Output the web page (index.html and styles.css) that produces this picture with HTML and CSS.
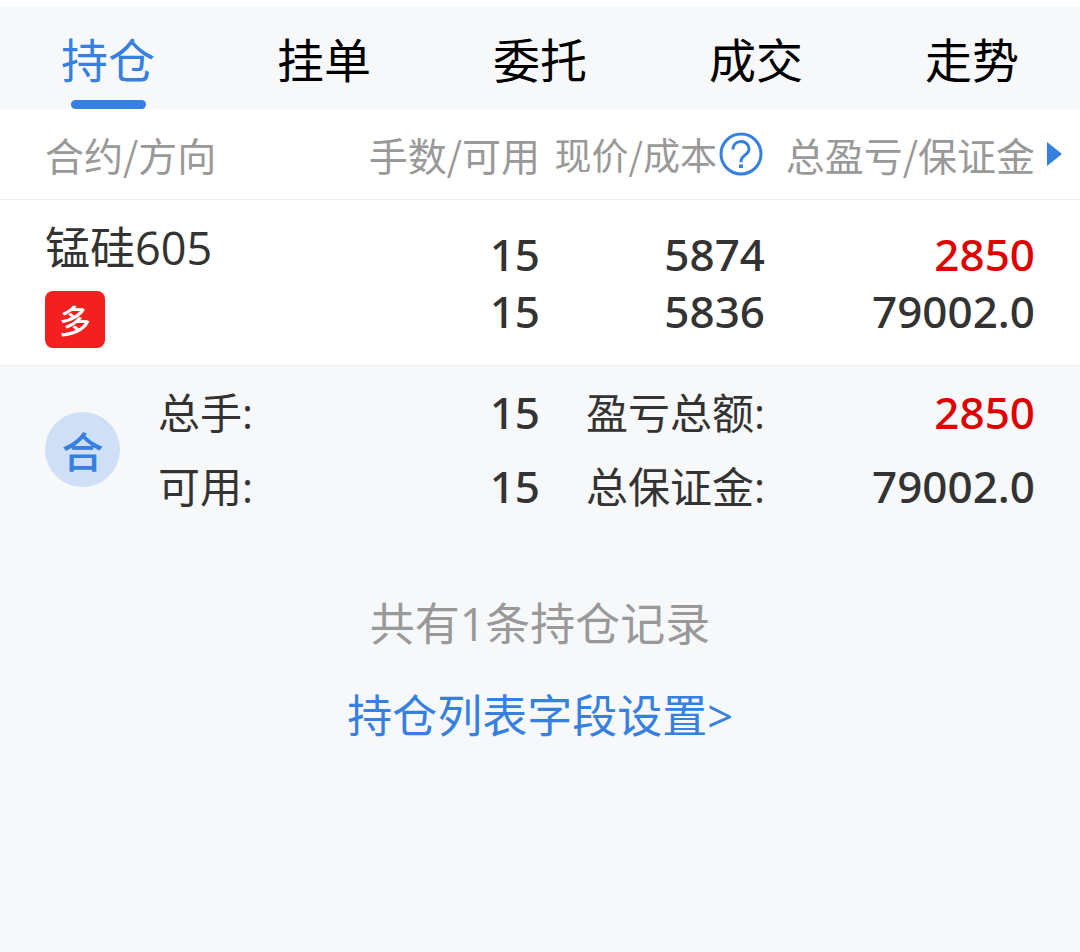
FILE: index.html
```html
<!DOCTYPE html>
<html lang="zh-CN">
<head>
<meta charset="UTF-8">
<meta name="viewport" content="width=device-width, initial-scale=1.0">
<link rel="stylesheet" href="styles.css">
<title>持仓</title>
</head>
<body>
<nav class="tabs">
  <button type="button" class="tab active">持仓</button>
  <button type="button" class="tab">挂单</button>
  <button type="button" class="tab">委托</button>
  <button type="button" class="tab">成交</button>
  <button type="button" class="tab">走势</button>
</nav>

<table class="positions">
  <colgroup>
    <col class="col-half">
    <col class="col-price">
    <col>
  </colgroup>
  <thead>
    <tr>
      <th>
        <div class="split"><span>合约/方向</span><span>手数/可用</span></div>
      </th>
      <th>
        <div class="price-head">
          <span>现价/成本</span>
          <button type="button" class="help" aria-label="说明">
            <svg width="44" height="44" viewBox="0 0 44 44" fill="none" stroke="#3580e0">
              <circle cx="22" cy="22" r="20" stroke-width="3"/>
              <path d="M14 17.500c0-5 3.500-8 8-8s8 3 8 7.200c0 3.300-1.700 4.800-4.200 6.500-2.600 1.800-3.800 3-3.800 7" stroke-width="3"/>
              <path d="M22 32.500v3.500" stroke-width="4"/>
            </svg>
          </button>
        </div>
      </th>
      <th class="last">
        <div class="profit-head">
          <span>总盈亏/保证金</span>
          <svg class="more" width="15" height="24" viewBox="0 0 15 24"><path d="M0 0l15 12L0 24z" fill="#3580e0"/></svg>
        </div>
      </th>
    </tr>
  </thead>
  <tbody>
    <tr>
      <td>
        <div class="split">
          <div class="contract">
            <div class="name">锰硅605</div>
            <span class="side">多</span>
          </div>
          <div class="num">15<br>15</div>
        </div>
      </td>
      <td class="num">5874<br>5836</td>
      <td class="num last"><span class="red">2850</span><br>79002.0</td>
    </tr>
  </tbody>
</table>

<section class="summary">
  <span class="sum-badge">合</span>
  <dl class="totals">
    <dt>总手:</dt>
    <dd>15</dd>
    <dt>盈亏总额:</dt>
    <dd class="red">2850</dd>
    <dt>可用:</dt>
    <dd>15</dd>
    <dt>总保证金:</dt>
    <dd>79002.0</dd>
  </dl>
</section>

<footer class="foot">
  <p class="count">共有1条持仓记录</p>
  <a href="#" class="settings">持仓列表字段设置&gt;</a>
</footer>
</body>
</html>
```
FILE: styles.css
```css
* {
  box-sizing: border-box;
}

body {
  margin: 0;
  border-top: 7px solid #fff;
  min-height: 100vh;
  background: #f7f8fa;
  color: #333;
  font-family: "Open Sans", "Noto Sans CJK SC", sans-serif;
}

button {
  padding: 0;
  border: 0;
  background: none;
  font-family: inherit;
  cursor: pointer;
}

/* top tabs */
.tabs {
  display: flex;
}

.tab {
  flex: 1;
  display: flex;
  flex-direction: column;
  align-items: center;
  justify-content: space-between;
  height: 102px;
  padding-top: 18px;
  font-size: 47px;
  line-height: 70px;
  color: #000;
}

.tab.active {
  color: #3580e0;
}

.tab.active::after {
  content: "";
  width: 75px;
  height: 9px;
  border-radius: 5px;
  background: #3580e0;
}

/* position list */
.positions {
  width: 100%;
  table-layout: fixed;
  border-collapse: collapse;
  background: #fff;
}

.col-half {
  width: 50%;
}

.col-price {
  width: 225px;
}

.positions th {
  height: 90px;
  padding: 0;
  border-bottom: 1px solid #eceef0;
  font-family: "Noto Sans CJK SC", sans-serif;
  font-size: 39px;
  font-weight: 400;
  line-height: 56px;
  color: #999;
  text-align: right;
  white-space: nowrap;
}

.positions td {
  height: 166px;
  padding: 26px 0 0;
  border-bottom: 1px solid #eceef0;
  vertical-align: top;
}

.split {
  display: flex;
  justify-content: space-between;
  padding-left: 45px;
}

.price-head {
  display: flex;
  align-items: center;
  justify-content: flex-end;
  gap: 2px;
  padding-right: 2px;
  font-size: 37px;
}

.help {
  display: flex;
}

.profit-head {
  display: flex;
  align-items: center;
  justify-content: flex-end;
  gap: 12px;
  padding-right: 18px;
}

.name {
  font-size: 45px;
  line-height: 44px;
}

.side {
  display: flex;
  align-items: center;
  justify-content: center;
  width: 60px;
  height: 57px;
  margin-top: 21px;
  border-radius: 8px;
  background: #f42020;
  color: #fff;
  font-size: 32px;
  font-weight: 500;
}

.num,
.totals dd {
  font-family: "Noto Sans", sans-serif;
  font-size: 44px;
  font-weight: 500;
  line-height: 57px;
  text-align: right;
}

.positions td.last {
  padding-right: 45px;
}

.red {
  color: #e00000;
}

/* totals */
.summary {
  display: flex;
  align-items: center;
  gap: 38px;
  padding: 10px 45px;
}

.sum-badge {
  display: flex;
  align-items: center;
  justify-content: center;
  width: 75px;
  height: 75px;
  border-radius: 50%;
  background: #cfdff6;
  color: #3580e0;
  font-size: 42px;
  font-weight: 500;
}

.totals {
  flex: 1;
  display: grid;
  grid-template-columns: auto 1fr 225px 270px;
  align-items: center;
  margin: 0;
}

.totals dt {
  font-size: 42px;
  line-height: 74px;
}

.totals dt:nth-of-type(even) {
  text-align: right;
}

.totals dd {
  margin: 0;
}

.foot {
  display: flex;
  flex-direction: column;
  align-items: center;
  gap: 24px;
  padding-top: 56px;
  font-size: 45px;
  line-height: 68px;
}

.count {
  margin: 0;
  color: #999;
}

.settings {
  color: #3580e0;
  text-decoration: none;
}
```
